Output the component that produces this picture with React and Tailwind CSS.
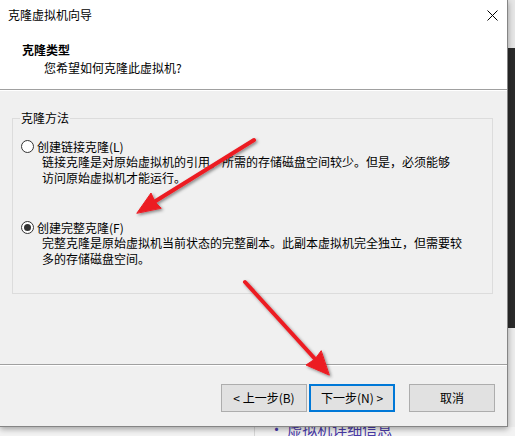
export default function App() {
  const btn =
    "w-[86px] h-[28px] flex items-center justify-center bg-[#e1e1e1] border border-[#adadad] text-[12px] leading-[16px]";
  return (
    <div className="relative w-[515px] h-[436px] overflow-hidden bg-[#f0f0f0] font-['Microsoft_YaHei_UI','Noto_Sans_CJK_SC',sans-serif] text-[12px] text-black">
      <div className="flex h-[427px]">
        <div className="w-[508px] h-[427px] flex flex-col bg-[#f0f0f0] border-r border-b border-[#858585] shadow-[0_2px_6px_rgba(0,0,0,0.35)] relative z-10">
          {/* header */}
          <div className="h-[90px] bg-white border-b border-[#a0a0a0] flex flex-col">
            <div className="h-[30px] flex items-center justify-between pl-[8px] pr-[9px]">
              <span className="leading-[16px]">克隆虚拟机向导</span>
              <svg width="11" height="11" viewBox="0 0 11 11">
                <path d="M0.5 0.5 L10.5 10.5 M10.5 0.5 L0.5 10.5" stroke="#000" strokeWidth="1" />
              </svg>
            </div>
            <div className="mt-[12px] pl-[22px] font-bold leading-[16px]">克隆类型</div>
            <div className="mt-[2px] pl-[44px] leading-[16px]">您希望如何克隆此虚拟机?</div>
          </div>
          {/* body */}
          <div className="h-[275px] border-t border-white border-b border-b-[#a0a0a0]">
            <fieldset className="mt-[19px] ml-[12px] w-[481px] border border-[#dcdcdc] p-0">
              <legend className="ml-[7px] px-[1px] leading-[16px]">克隆方法</legend>
              <div className="pt-[13px] pb-[26px]">
                <div className="flex items-center h-[15px] pl-[8px] gap-[3px]">
                  <span className="w-[13px] h-[13px] rounded-full border border-[#333333] bg-white"></span>
                  <span className="leading-[16px]">创建链接克隆(L)</span>
                </div>
                <div className="pl-[29px] leading-[16px]">
                  <div>链接克隆是对原始虚拟机的引用，所需的存储磁盘空间较少。但是，必须能够</div>
                  <div>访问原始虚拟机才能运行。</div>
                </div>
                <div className="mt-[34px] flex items-center h-[15px] pl-[8px] gap-[3px]">
                  <span className="w-[13px] h-[13px] rounded-full border border-[#333333] bg-white flex items-center justify-center">
                    <span className="w-[7px] h-[7px] rounded-full bg-[#333333]"></span>
                  </span>
                  <span className="leading-[16px]">创建完整克隆(F)</span>
                </div>
                <div className="pl-[29px] leading-[16px]">
                  <div>完整克隆是原始虚拟机当前状态的完整副本。此副本虚拟机完全独立，但需要较</div>
                  <div>多的存储磁盘空间。</div>
                </div>
              </div>
            </fieldset>
          </div>
          {/* footer */}
          <div className="flex-1 border-t border-white pt-[18px] pr-[12px] flex justify-end items-start">
            <div className={btn}>&lt; 上一步(B)</div>
            <div className="w-[86px] h-[28px] ml-[2px] flex items-center justify-center bg-[#e1e1e1] border-2 border-[#0078d7] leading-[16px]">
              下一步(N) &gt;
            </div>
            <div className={btn + " ml-[14px]"}>取消</div>
          </div>
        </div>
        {/* right strip of desktop */}
        <div className="w-[7px] flex flex-col">
          <div className="h-[48px] bg-[#e6e6e6]"></div>
          <div className="h-[280px] bg-[#2b2b2b]"></div>
          <div className="flex-1 bg-[#ececec]"></div>
        </div>
      </div>
      {/* bottom strip */}
      <div className="h-[9px] relative overflow-hidden bg-[#f3f3f3]">
        <div className="flex h-full">
          <div className="w-[255px] border-r border-[#d6d6d6]"></div>
          <div className="-mt-[7px] pl-[14px] text-[15px] leading-[18px] text-[#4a3aa8] whitespace-nowrap">
            · 虚拟机详细信息
          </div>
        </div>
      </div>
      {/* red annotation arrows */}
      <svg className="absolute inset-0 z-20 pointer-events-none" width="515" height="436" viewBox="0 0 515 436">
        <defs>
          <filter id="sh" x="-20%" y="-20%" width="140%" height="140%">
            <feDropShadow dx="1.5" dy="1.5" stdDeviation="1.5" floodColor="#000" floodOpacity="0.45" />
          </filter>
        </defs>
        <g filter="url(#sh)" fill="#ec1c24" stroke="#ec1c24" strokeLinecap="round">
          <line x1="254" y1="140" x2="154" y2="202" strokeWidth="4" />
          <polygon points="137,213 151,193 155,202 161,208" strokeWidth="1" strokeLinejoin="round" />
          <line x1="245" y1="282" x2="316" y2="360" strokeWidth="4" />
          <polygon points="329,375 306,365 315,359 321,351" strokeWidth="1" strokeLinejoin="round" />
        </g>
      </svg>
    </div>
  );
}
